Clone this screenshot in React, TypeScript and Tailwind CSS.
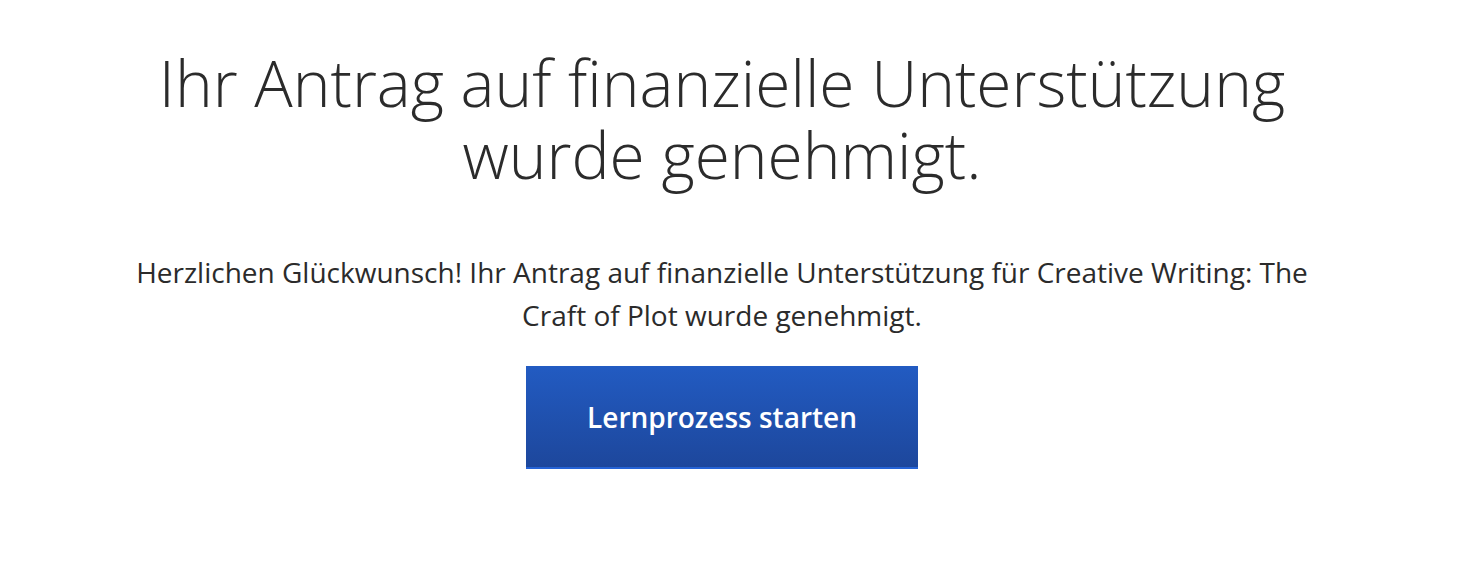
export default function App() {
  return (
    <main className="min-h-screen bg-white" style={{ fontFamily: '"Open Sans", sans-serif' }}>
      <div className="mx-auto flex w-[1444px] flex-col items-center pt-[47px] mr-[22px]">
        <h1 className="max-w-[1200px] text-center text-[64px] font-light leading-[72px] text-[#2b2b2b]">
          Ihr Antrag auf finanzielle Unterstützung wurde genehmigt.
        </h1>

        <p className="mt-[60px] max-w-[1200px] text-center text-[28px] leading-[43px] text-[#2b2b2b]">
          Herzlichen Glückwunsch! Ihr Antrag auf finanzielle Unterstützung für Creative Writing: The Craft of Plot wurde genehmigt.
        </p>

        <button className="mt-[29px] h-[103px] w-[392px] border-b-2 border-[#2563d6] bg-gradient-to-b from-[#225bc2] to-[#1d479c] text-[28px] font-semibold text-white">
          Lernprozess starten
        </button>
      </div>
    </main>
  );
}
